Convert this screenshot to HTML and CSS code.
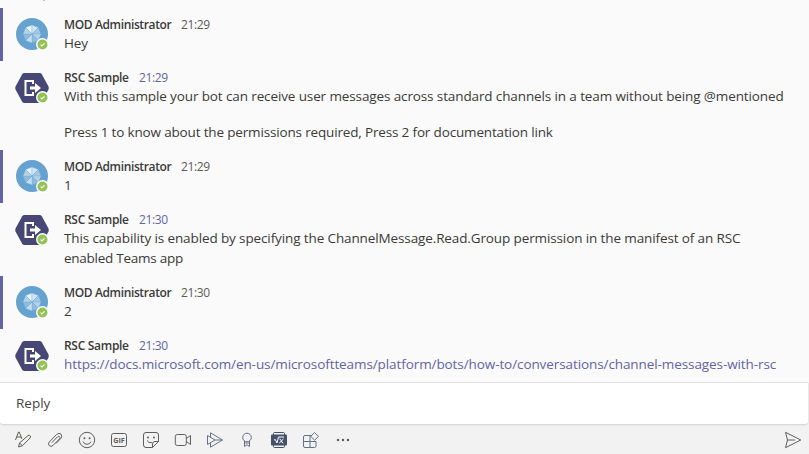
FILE: index.html
```html
<!DOCTYPE html>
<html lang="en">
<head>
<meta charset="utf-8">
<title>Channel conversation</title>
<link rel="stylesheet" href="styles.css">
</head>
<body>
<svg class="defs" width="0" height="0" aria-hidden="true">
  <symbol id="admin" viewBox="0 0 32 32">
    <circle cx="16" cy="16" r="16" fill="#65a2cf"/>
    <g stroke="#65a2cf" stroke-width=".3">
      <path d="M16 16V7L9.6 9.6Z" fill="#e6f1f8"/>
      <path d="M16 16V7L22.4 9.6Z" fill="#d0e4f2"/>
      <path d="M16 16L22.4 9.6L25 16Z" fill="#a2c9e3"/>
      <path d="M16 16H25L22.4 22.4Z" fill="#b4d3e9"/>
      <path d="M16 16L22.4 22.4L16 25Z" fill="#8fbddd"/>
      <path d="M16 16V25L9.6 22.4Z" fill="#c4ddee"/>
      <path d="M16 16L9.6 22.4L7 16Z" fill="#8fbddd"/>
      <path d="M16 16H7L9.6 9.6Z" fill="#b4d3e9"/>
    </g>
  </symbol>
  <symbol id="bot" viewBox="0 0 34 30">
    <path d="M9.500 0H24.500Q26 0 26.800 1.300L33.500 13.500Q34 15 33.500 16.500L26.800 28.700Q26 30 24.500 30H9.500Q8 30 7.200 28.700L.5 16.500Q0 15 .5 13.500L7.200 1.300Q8 0 9.500 0Z" fill="#464775"/>
    <path d="M18 11V8H10.500V22H18V19" fill="none" stroke="#fff" stroke-width="2"/>
    <path d="M15 13.500H20V10L26 15L20 20V16.500H15Z" fill="#fff"/>
  </symbol>
  <symbol id="status" viewBox="0 0 13 13">
    <circle cx="6.500" cy="6.500" r="6.500" fill="#fff"/>
    <circle cx="6.500" cy="6.500" r="5" fill="#92c353"/>
    <path d="M4.500 6.600L5.900 8L8.500 5.400" fill="none" stroke="#fff" stroke-width="1.100"/>
  </symbol>
</svg>

<main class="thread">
  <i class="remnant"></i>
  <article class="msg own">
    <div class="avatar"><svg class="face"><use href="#admin"/></svg><svg class="status"><use href="#status"/></svg></div>
    <div class="content"><header><b>MOD Administrator</b><time>21:29</time></header><p>Hey</p></div>
  </article>
  <article class="msg intro">
    <div class="avatar"><svg class="face bot"><use href="#bot"/></svg><svg class="status"><use href="#status"/></svg></div>
    <div class="content"><header><b class="app">RSC Sample</b><time>21:29</time></header><p>With this sample your bot can receive user messages across standard channels in a team without being @mentioned</p><p class="next">Press 1 to know about the permissions required, Press 2 for documentation link</p></div>
  </article>
  <article class="msg own">
    <div class="avatar"><svg class="face"><use href="#admin"/></svg><svg class="status"><use href="#status"/></svg></div>
    <div class="content"><header><b>MOD Administrator</b><time>21:29</time></header><p>1</p></div>
  </article>
  <article class="msg capability">
    <div class="avatar"><svg class="face bot"><use href="#bot"/></svg><svg class="status"><use href="#status"/></svg></div>
    <div class="content"><header><b class="app">RSC Sample</b><time>21:30</time></header><p>This capability is enabled by specifying the ChannelMessage.Read.Group permission in the manifest of an RSC<br><span class="tail">enabled Teams app</span></p></div>
  </article>
  <article class="msg own">
    <div class="avatar"><svg class="face"><use href="#admin"/></svg><svg class="status"><use href="#status"/></svg></div>
    <div class="content"><header><b>MOD Administrator</b><time>21:30</time></header><p>2</p></div>
  </article>
  <article class="msg">
    <div class="avatar"><svg class="face bot"><use href="#bot"/></svg><svg class="status"><use href="#status"/></svg></div>
    <div class="content"><header><b class="app">RSC Sample</b><time>21:30</time></header><p><a class="link">https://docs.microsoft.com/en-us/microsoftteams/platform/bots/how-to/conversations/channel-messages-with-rsc</a></p></div>
  </article>
</main>

<div class="composer"><div class="reply">Reply</div></div>

<footer class="toolbar">
  <svg viewBox="0 0 18 18"><path d="M1.500 9L4.500 1H5.200L8 8M2.700 6H7.200M4.500 16L5.500 12L14 4.600Q15.500 3.800 16.300 5Q17 6 16 7L8.500 14.700ZM5.500 12L8.500 14.700"/></svg>
  <svg viewBox="0 0 18 18"><path d="M5.800 11.700L11.500 5.800Q12.800 4.800 13.600 5.700Q14.500 6.700 13.500 7.800L7 14.500Q4.800 16.200 3.200 14.600Q1.600 13 3.300 11L10.500 3.500Q13 1.300 15 3.200Q16.800 5.200 14.800 7.500L10 12.500"/></svg>
  <svg viewBox="0 0 18 18"><circle cx="9" cy="9" r="7.700"/><path d="M5 10.500Q6 13.300 9 13.300T13 10.500"/><circle class="dot" cx="6.400" cy="7.200" r="1"/><circle class="dot" cx="11.600" cy="7.200" r="1"/></svg>
  <svg viewBox="0 0 18 18"><rect x="1.500" y="2.500" width="15" height="13" rx="2"/><text x="3.200" y="12" textLength="11.600" lengthAdjust="spacingAndGlyphs">GIF</text></svg>
  <svg viewBox="0 0 18 18"><path d="M4 1.500H14Q16.500 1.500 16.500 4V10.500L10.500 16.500H4Q1.500 16.500 1.500 14V4Q1.500 1.500 4 1.500ZM16.500 10.500H13Q10.500 10.500 10.500 13V16.500M5 9.500Q6.500 12.300 10 11.700"/><circle class="dot" cx="6" cy="6.500" r="1"/><circle class="dot" cx="12" cy="6.500" r="1"/></svg>
  <svg viewBox="0 0 18 18"><rect x="1.300" y="3.500" width="11" height="11" rx="2"/><path d="M12.300 7.500L16.500 4.500V13.500L12.300 10.500"/></svg>
  <svg class="blue" viewBox="0 0 18 18"><path d="M4.500 6V1.800L16.500 9L4.500 16.200V12M1.500 4.500V13.500L9 9ZM9 9H16.500"/></svg>
  <svg class="blue" viewBox="0 0 18 18"><circle cx="9" cy="6.500" r="4.300"/><path d="M6.500 10V15.500L9 13.800L11.500 15.500V10M6.500 12H11.500"/></svg>
  <svg class="math" viewBox="0 0 18 18"><rect class="frame" x="3.500" y="1.500" width="11" height="15" rx="1"/><rect class="solid" x="1" y="3.500" width="16" height="11" rx="1"/><path class="line" d="M4 9L5.300 8.500L7 12L8.500 6H14M9.500 8Q11 8 11.300 9.800T13.300 12M13.500 8L9.300 12"/></svg>
  <svg class="blue" viewBox="0 0 18 18"><path d="M9 4.500H3Q1.500 4.500 1.500 6V15Q1.500 16.500 3 16.500H12.500Q14 16.500 14 15V10.500H1.500M8 4.500V16.500M12.600 1.500L16.500 5.300L12.600 9.200L8.700 5.300Z"/></svg>
  <svg viewBox="0 0 18 18"><circle class="dot" cx="4" cy="9" r="1.250"/><circle class="dot" cx="9" cy="9" r="1.250"/><circle class="dot" cx="14" cy="9" r="1.250"/></svg>
  <svg class="send" viewBox="0 0 18 18"><path d="M1.500 1.300L16.800 9L1.500 16.700L3.500 9ZM3.500 9H11"/></svg>
</footer>
</body>
</html>
```
FILE: styles.css
```css
* { box-sizing: border-box; }
body {
  margin: 0;
  width: 809px;
  height: 454px;
  overflow: hidden;
  display: flex;
  flex-direction: column;
  background: #f3f2f2;
  color: #3b3a38;
  font: 13.5px/19.600px "Open Sans", "Noto Sans", sans-serif;
}
.defs { position: absolute; }
.thread {
  height: 382px;
  padding-top: 8px;
  background: #fafafa;
  position: relative;
}
.remnant { position: absolute; left: 43px; top: 0; width: 2px; height: 1px; background: #b9b9dd; }
.msg {
  display: flex;
  height: 53px;
  padding: 8px 0 0 12px;
  border-left: 3px solid transparent;
}
.own { border-color: #6264a7; }
.intro { height: 89px; }
.capability { height: 73px; }
.avatar { position: relative; width: 34px; height: 34px; margin: 1px 15px 0 0; }
.face { display: block; width: 32px; height: 32px; margin: 1px 0 0 1px; }
.bot { width: 34px; height: 30px; margin: 3px 0 0; }
.status { position: absolute; left: 21px; top: 21px; width: 13px; height: 13px; }
.content { white-space: nowrap; }
header { display: flex; gap: 10px; height: 18px; line-height: 18px; font-size: 12px; }
b { width: 107px; font-weight: 600; letter-spacing: -.37px; }
.app { width: 65px; letter-spacing: -.3px; }
time { color: #5c5a58; letter-spacing: -.35px; }
.app + time { color: #6264a7; }
p { margin: 0; letter-spacing: -.117px; }
.next { margin-top: 16px; letter-spacing: -.16px; }
.tail { letter-spacing: -.26px; }
.link { color: #6264a7; letter-spacing: -.09px; }
.composer { height: 42px; background: #f3f2f2; }
.reply {
  height: 42px;
  padding: 11px 16px;
  background: #fff;
  border-top: 1px solid #e3e2e1;
  border-radius: 0 0 3px 3px;
  box-shadow: 0 1px 2px #0002;
  margin-right: 1px;
  color: #484644;
}
.toolbar { display: flex; align-items: center; gap: 14px; height: 30px; padding: 2px 7px 0 14px; }
.toolbar svg { width: 18px; height: 18px; fill: none; stroke: #605e5c; stroke-width: 1; stroke-linejoin: round; }
.toolbar text { font: 700 7.500px "Open Sans", sans-serif; fill: #605e5c; stroke: none; }
.toolbar .dot { fill: #605e5c; stroke: none; }
.toolbar .blue { stroke: #64708a; }
.toolbar .frame { stroke: #45516b; }
.toolbar .solid { fill: #45516b; stroke: none; }
.toolbar .line { stroke: #fff; }
.toolbar .send { margin-left: auto; }
```
